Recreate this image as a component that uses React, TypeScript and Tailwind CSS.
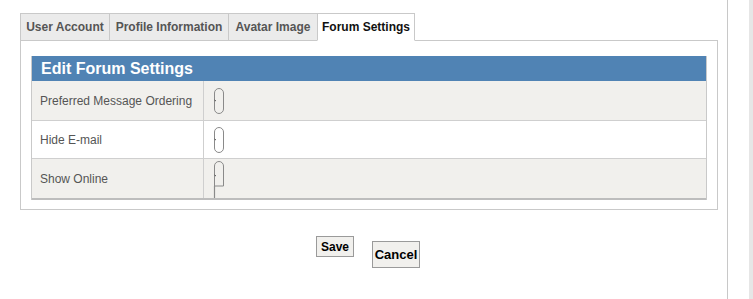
import React from "react";

const font = { fontFamily: '"Liberation Sans", Arial, sans-serif' };

function Pill({ variant }: { variant: number }) {
  if (variant === 2) {
    return (
      <svg width="14" height="40" viewBox="0 0 14 40" className="block">
        <path d="M2.5 28 V8 a4.5 4.5 0 0 1 9 0 V28 H2.5" fill="none" stroke="#8a8a8a" strokeWidth="1" />
        <path d="M2.5 28 V40" stroke="#8a8a8a" strokeWidth="1.2" />
        <path d="M2.5 17 L4 18" stroke="#555" strokeWidth="1" />
      </svg>
    );
  }
  return (
    <svg width="14" height="28" viewBox="0 0 14 28" className="block">
      <rect x="2.5" y="1.5" width="9" height="25" rx="4.5" fill="none" stroke="#8a8a8a" strokeWidth="1" />
      <path d="M2.5 13 L4 14" stroke="#555" strokeWidth="1" />
    </svg>
  );
}

export default function App() {
  const tabs = [
    { label: "User Account", w: "w-[90px]", active: false },
    { label: "Profile Information", w: "w-[120px]", active: false },
    { label: "Avatar Image", w: "w-[90px]", active: false },
    { label: "Forum Settings", w: "w-[98px]", active: true },
  ];
  const rows = [
    { label: "Preferred Message Ordering", h: "h-[40px]", bg: "bg-[#f1f0ed]", v: 0 },
    { label: "Hide E-mail", h: "h-[38px]", bg: "bg-white", v: 1 },
    { label: "Show Online", h: "h-[39px]", bg: "bg-[#f1f0ed]", v: 2 },
  ];
  return (
    <div className="w-[753px] h-[299px] bg-white flex overflow-hidden" style={font}>
      <div className="w-[728px] h-full border-r border-[#c8c8c8] pl-[20px] pt-[13px] flex flex-col">
        <div className="flex h-[27px]">
          {tabs.map((t) => (
            <div
              key={t.label}
              className={`${t.w} h-[28px] border border-[#c9c9c9] -ml-px first:ml-0 flex items-center justify-center text-[12px] font-bold ${
                t.active ? "bg-white text-[#111] border-b-white relative z-10" : "bg-[#ebebeb] text-[#555]"
              }`}
            >
              {t.label}
            </div>
          ))}
        </div>
        <div className="w-[698px] h-[170px] border border-[#c9c9c9] pt-[15px] pl-[10px]">
          <div className="w-[676px] border-l border-r border-[#c9c9c9]">
            <div className="h-[25px] bg-[#5083b4] text-white font-bold text-[16px] flex items-center pl-[9px]">
              Edit Forum Settings
            </div>
            {rows.map((r, i) => (
              <div
                key={r.label}
                className={`${r.h} ${r.bg} flex ${i < 2 ? "border-b border-[#cfcfcf]" : ""}`}
              >
                <div className="w-[172px] border-r border-[#cfcfcf] flex items-center pl-[8px] text-[12px] text-[#555]">
                  {r.label}
                </div>
                <div className={`flex-1 flex ${r.v === 2 ? "items-end" : "items-center"} pl-[8px]`}>
                  <Pill variant={r.v} />
                </div>
              </div>
            ))}
            <div className="h-[2px] bg-[#bdbdbd]" />
          </div>
        </div>
        <div className="flex items-start mt-[26px] ml-[296px]">
          <button className="w-[38px] h-[21px] bg-[#f1f0ed] border border-[#9a9a9a] text-[12px] font-bold text-black flex items-center justify-center">
            Save
          </button>
          <button className="w-[48px] h-[27px] mt-[5px] ml-[18px] bg-[#f1f0ed] border border-[#9a9a9a] text-[13px] font-bold text-black flex items-center justify-center">
            Cancel
          </button>
        </div>
      </div>
      <div className="w-[21px] h-full bg-white" />
      <div className="w-[4px] h-full bg-[#e6e6e6]" />
    </div>
  );
}
